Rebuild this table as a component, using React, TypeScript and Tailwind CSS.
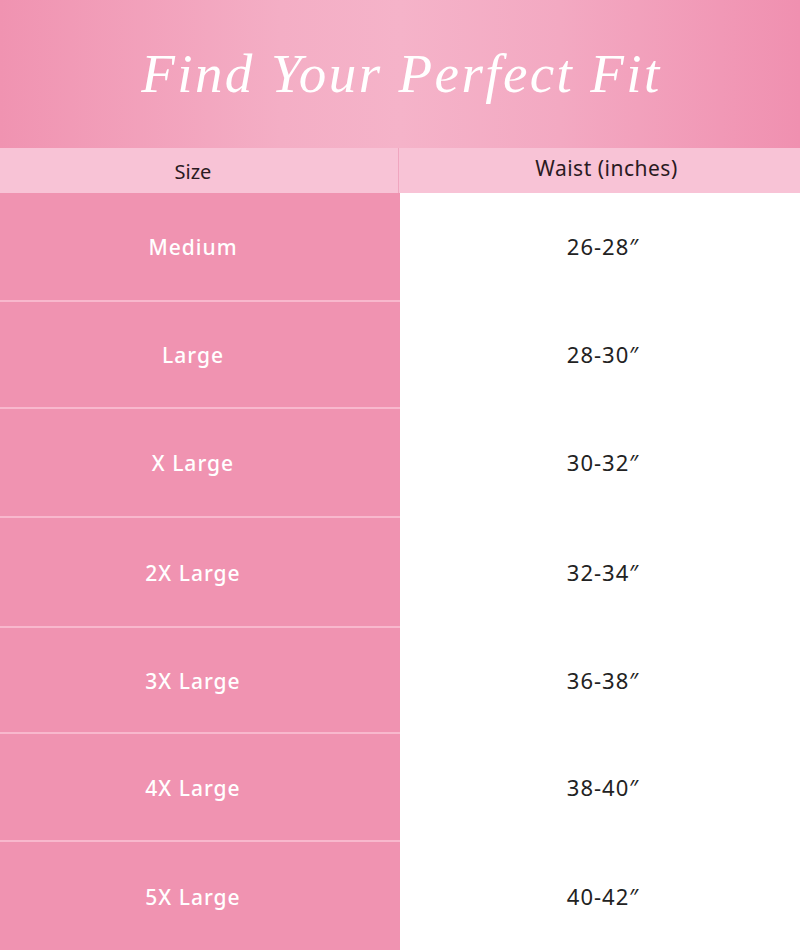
import React from "react";

const rows: { size: string; waist: string; h: string }[] = [
  { size: "Medium", waist: "26-28″", h: "h-[107px]" },
  { size: "Large", waist: "28-30″", h: "h-[105px]" },
  { size: "X Large", waist: "30-32″", h: "h-[107px]" },
  { size: "2X Large", waist: "32-34″", h: "h-[108px]" },
  { size: "3X Large", waist: "36-38″", h: "h-[104px]" },
  { size: "4X Large", waist: "38-40″", h: "h-[106px]" },
  { size: "5X Large", waist: "40-42″", h: "h-[108px]" },
];

export default function App() {
  return (
    <div className="w-[800px] h-[950px] overflow-hidden bg-white font-['Noto_Sans',sans-serif]">
      <div className="h-[148px] flex items-center justify-center bg-[linear-gradient(90deg,#f093b1_0%,#f4aec5_35%,#f5b3c9_50%,#f3a9c2_70%,#f090b0_100%)]">
        <h1 className="text-white italic font-['Liberation_Serif',serif] text-[55px] tracking-[2.4px] leading-none mb-[2px] pl-[3px]">
          Find Your Perfect Fit
        </h1>
      </div>
      <div className="flex h-[45px] bg-[#f8c3d6] text-[#2a1a22] text-[20px]">
        <div className="w-[399px] flex items-center justify-center border-r border-[#efa6bf] pr-[12px] pt-[2px]">Size</div>
        <div className="flex-1 flex items-center justify-center pb-[4px] pl-[14px] tracking-[0.5px] text-[21px]">Waist (inches)</div>
      </div>
      <div className="flex flex-col">
        {rows.map((r, i) => (
          <div key={r.size} className="flex flex-col">
            {i > 0 && (
              <div className="flex h-[2px]">
                <div className="w-[400px] bg-[#f8b8cd]" />
                <div className="flex-1 bg-white" />
              </div>
            )}
            <div className={`flex ${r.h}`}>
              <div className="w-[400px] bg-[#f093b1] flex items-center justify-center text-white text-[21px] font-medium tracking-[1px] pr-[14px] pt-[3px]">
                {r.size}
              </div>
              <div className="flex-1 flex items-center justify-center text-[#222] text-[22px] tracking-[1px] pl-[6px]">
                {r.waist}
              </div>
            </div>
          </div>
        ))}
      </div>
    </div>
  );
}
